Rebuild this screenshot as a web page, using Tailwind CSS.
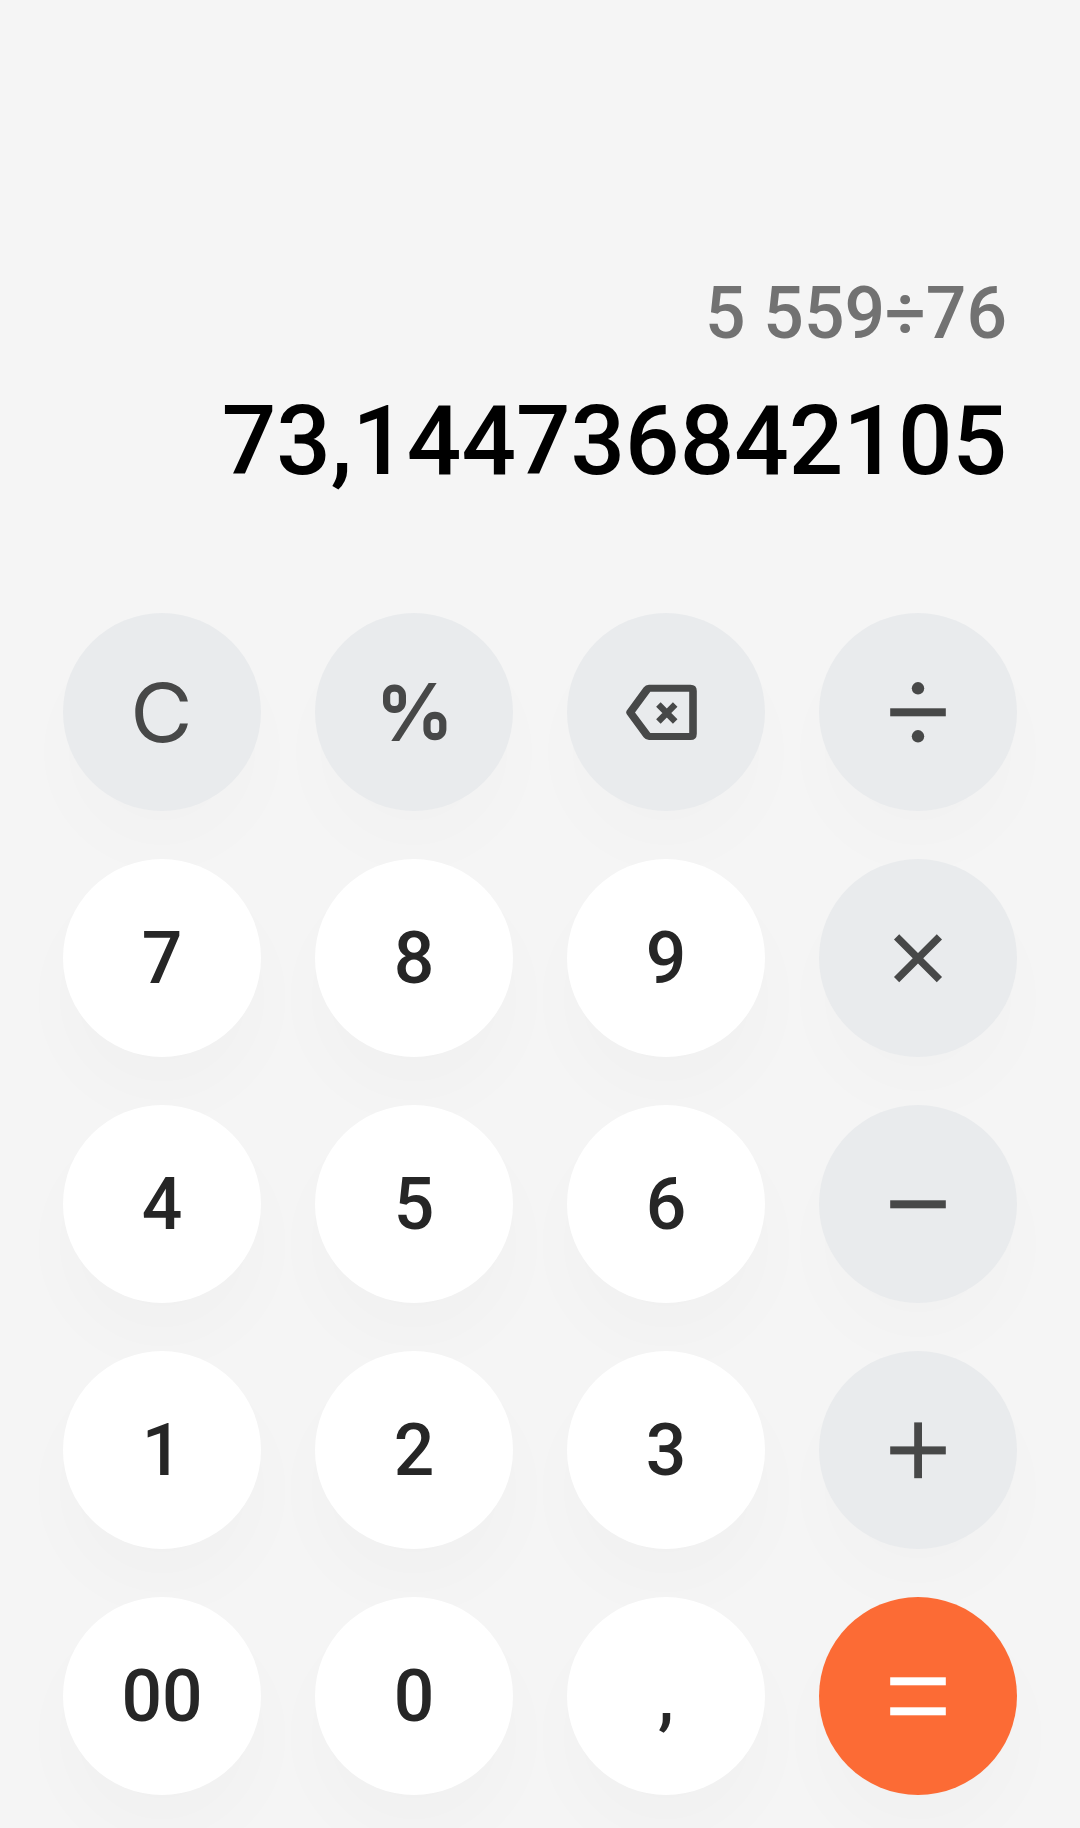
<!DOCTYPE html>
<html lang="en">
<head>
  <meta charset="UTF-8">
  <meta name="viewport" content="width=device-width, initial-scale=1.0">
  <title>Calculator</title>
  <script src="https://cdn.jsdelivr.net/npm/@tailwindcss/browser@4"></script>
</head>
<body class="bg-[#f5f5f5] font-[Roboto,sans-serif]">
  <div class="h-[1828px] overflow-hidden flex flex-col">
    <!-- Display -->
    <header class="h-[613px] pt-[272px] pr-[73px] text-right font-medium whitespace-nowrap">
      <div class="text-[71.4px] leading-[84px] text-[#727272]">5 559÷76</div>
      <div class="mt-7 text-[96px] leading-[114px] text-black">73,144736842105</div>
    </header>

    <!-- Keypad -->
    <main class="grid grid-cols-4 gap-x-[54px] gap-y-12 px-[63px] text-[71.4px] leading-none font-medium text-[#262626]">
      <button aria-label="Clear" class="size-[198px] rounded-full bg-[#e9ebed] shadow-[0_40px_72px_rgba(0,0,0,0.014)] flex items-center justify-center font-[Inter,sans-serif] font-normal text-[80.5px] text-[#474848]"><span class="scale-x-[1.06] pr-[2px] pt-[3px]">C</span></button>
      <button aria-label="Percent" class="size-[198px] rounded-full bg-[#e9ebed] shadow-[0_40px_72px_rgba(0,0,0,0.014)] flex items-center justify-center text-[#474848]">
        <svg class="w-[66px] h-[58px] mr-px" viewBox="0 0 66 58" fill="none" stroke="currentColor" stroke-width="7.2">
          <rect x="5.6" y="5.1" width="15.8" height="21.4" rx="7.5" />
          <rect x="46" y="32.3" width="15.8" height="21.4" rx="7.5" />
          <path d="M55.5 -6L10.4 64" stroke-width="6.7" />
        </svg>
      </button>
      <button aria-label="Backspace" class="size-[198px] rounded-full bg-[#e9ebed] shadow-[0_40px_72px_rgba(0,0,0,0.014)] flex items-center justify-center text-[#474848]">
        <svg class="size-[84px]" viewBox="0 0 84 84" fill="none" stroke="currentColor" stroke-width="6.4">
          <path fill="currentColor" stroke="none" fill-rule="evenodd" d="M25 14.7H66.5Q72.8 14.7 72.8 21V63.7Q72.8 70 66.5 70H25Q21.6 70 19.6 67.3L2.6 44Q1.6 42.4 2.6 40.8L19.6 17.4Q21.6 14.7 25 14.7ZM26.3 21.7L11 42.4L26.3 63H65.2V21.7Z" />
          <path d="M34.4 34.6L51.2 51.4M51.2 34.6L34.4 51.4" />
        </svg>
      </button>
      <button aria-label="Divide" class="size-[198px] rounded-full bg-[#e9ebed] shadow-[0_40px_72px_rgba(0,0,0,0.014)] flex items-center justify-center text-[#474848]">
        <svg class="size-[72px]" viewBox="0 0 72 72" fill="currentColor">
          <rect x="8.2" y="32.3" width="55.6" height="8" />
          <circle cx="36" cy="12.3" r="6.2" />
          <circle cx="36" cy="60.3" r="6.2" />
        </svg>
      </button>

      <button class="size-[198px] rounded-full bg-white shadow-[0_40px_72px_rgba(0,0,0,0.018)] flex items-center justify-center pt-0.5">7</button>
      <button class="size-[198px] rounded-full bg-white shadow-[0_40px_72px_rgba(0,0,0,0.018)] flex items-center justify-center pt-0.5">8</button>
      <button class="size-[198px] rounded-full bg-white shadow-[0_40px_72px_rgba(0,0,0,0.018)] flex items-center justify-center pt-0.5">9</button>
      <button aria-label="Multiply" class="size-[198px] rounded-full bg-[#e9ebed] shadow-[0_40px_72px_rgba(0,0,0,0.014)] flex items-center justify-center text-[#474848]">
        <svg class="size-[72px]" viewBox="0 0 72 72" fill="none" stroke="currentColor" stroke-width="7.4">
          <path d="M14.6 14.9L57.4 57.7M57.4 14.9L14.6 57.7" />
        </svg>
      </button>

      <button class="size-[198px] rounded-full bg-white shadow-[0_40px_72px_rgba(0,0,0,0.018)] flex items-center justify-center pt-0.5">4</button>
      <button class="size-[198px] rounded-full bg-white shadow-[0_40px_72px_rgba(0,0,0,0.018)] flex items-center justify-center pt-0.5">5</button>
      <button class="size-[198px] rounded-full bg-white shadow-[0_40px_72px_rgba(0,0,0,0.018)] flex items-center justify-center pt-0.5">6</button>
      <button aria-label="Subtract" class="size-[198px] rounded-full bg-[#e9ebed] shadow-[0_40px_72px_rgba(0,0,0,0.014)] flex items-center justify-center text-[#474848]">
        <svg class="size-[72px]" viewBox="0 0 72 72" fill="currentColor">
          <rect x="8.2" y="32.3" width="55.6" height="8" />
        </svg>
      </button>

      <button class="size-[198px] rounded-full bg-white shadow-[0_40px_72px_rgba(0,0,0,0.018)] flex items-center justify-center pt-0.5">1</button>
      <button class="size-[198px] rounded-full bg-white shadow-[0_40px_72px_rgba(0,0,0,0.018)] flex items-center justify-center pt-0.5">2</button>
      <button class="size-[198px] rounded-full bg-white shadow-[0_40px_72px_rgba(0,0,0,0.018)] flex items-center justify-center pt-0.5">3</button>
      <button aria-label="Add" class="size-[198px] rounded-full bg-[#e9ebed] shadow-[0_40px_72px_rgba(0,0,0,0.014)] flex items-center justify-center text-[#474848]">
        <svg class="size-[72px]" viewBox="0 0 72 72" fill="currentColor">
          <rect x="8.2" y="32.4" width="55.6" height="8" />
          <rect x="32.2" y="8.4" width="7.8" height="55.8" />
        </svg>
      </button>

      <button class="size-[198px] rounded-full bg-white shadow-[0_40px_72px_rgba(0,0,0,0.018)] flex items-center justify-center pt-0.5">00</button>
      <button class="size-[198px] rounded-full bg-white shadow-[0_40px_72px_rgba(0,0,0,0.018)] flex items-center justify-center pt-0.5">0</button>
      <button class="size-[198px] rounded-full bg-white shadow-[0_40px_72px_rgba(0,0,0,0.018)] flex items-center justify-center pt-0.5">,</button>
      <button aria-label="Equals" class="size-[198px] rounded-full bg-[#fc6b35] shadow-[0_40px_72px_rgba(0,0,0,0.018)] flex items-center justify-center text-white">
        <svg class="size-[72px]" viewBox="0 0 72 72" fill="currentColor">
          <rect x="8.2" y="17.3" width="55.6" height="8" />
          <rect x="8.2" y="47.3" width="55.6" height="8" />
        </svg>
      </button>
    </main>
  </div>
</body>
</html>
